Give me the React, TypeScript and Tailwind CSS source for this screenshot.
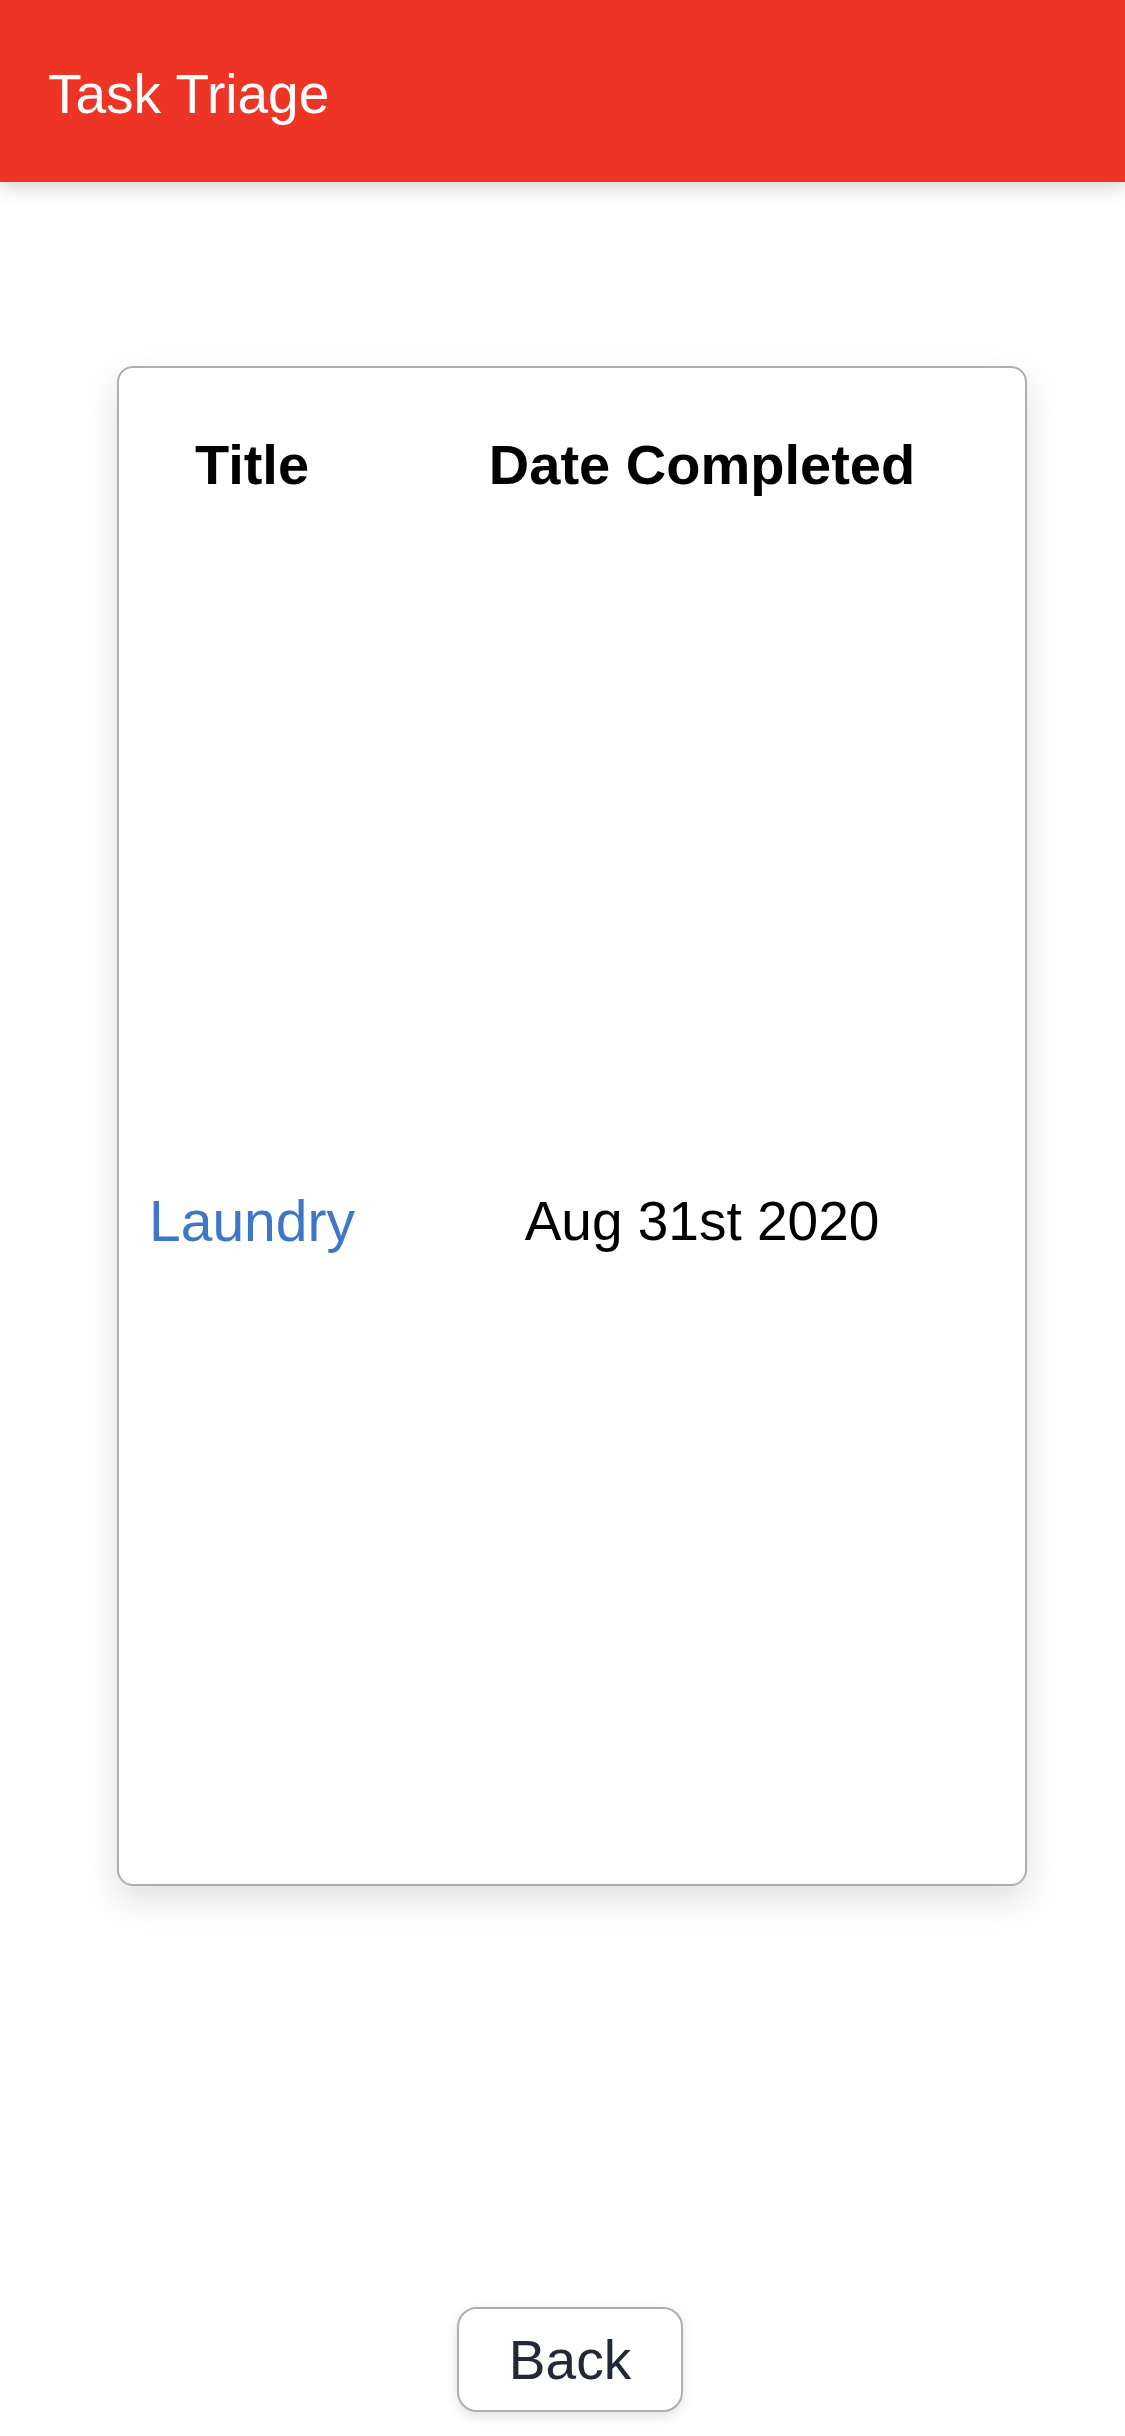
const FONT = "font-['Liberation_Sans',Arial,sans-serif]"

const tasks = [{ id: 1, title: 'Laundry', completed: 'Aug 31st 2020' }]

function Header() {
  return (
    <header className="relative z-10 h-[182px] bg-[#ee3425] pl-[48px] pt-[63px] shadow-[0_6px_18px_rgba(0,0,0,0.16)]">
      <h1 className="text-[55px] leading-[62px] text-white">Task Triage</h1>
    </header>
  )
}

export default function App() {
  return (
    <div className={`${FONT} min-h-[2436px] bg-white flex flex-col`}>
      <Header />

      <main className="flex flex-col">
        {/* completed tasks card */}
        <div className="ml-[117px] mt-[184px] h-[1520px] w-[910px] rounded-[16px] border-2 border-[#a9b1af] bg-white shadow-[0_14px_34px_rgba(0,0,0,0.13)]">
          <div className="grid grid-cols-[266px_634px] pt-[65px]">
            <div className="text-center text-[56px] font-bold leading-[64px] text-black">Title</div>
            <div className="text-center text-[56px] font-bold leading-[64px] text-black">Date Completed</div>
          </div>
          {tasks.map((t) => (
            <div key={t.id} className="mt-[689px] grid h-[69px] grid-cols-[266px_634px] items-center">
              <a className="text-center text-[57px] leading-[64px] text-[#3d77c5]">{t.title}</a>
              <div className="text-center text-[55px] leading-[64px] text-black">{t.completed}</div>
            </div>
          ))}
        </div>

        <button
          type="button"
          className="ml-[457px] mt-[421px] h-[105px] w-[226px] rounded-[20px] border-2 border-[#a9b1af] bg-white text-[55px] leading-[62px] text-[#212837] shadow-[0_4px_12px_rgba(0,0,0,0.12)]"
        >
          Back
        </button>
      </main>
    </div>
  )
}
